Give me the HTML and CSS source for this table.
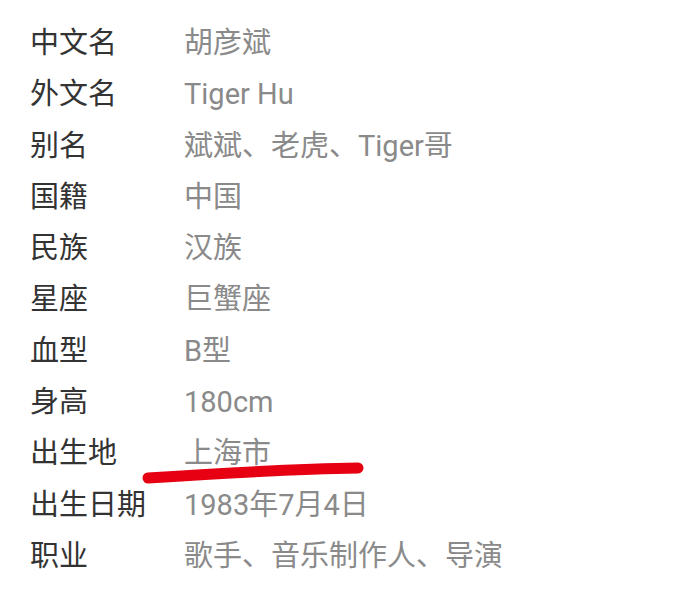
FILE: index.html
```html
<!DOCTYPE html>
<html lang="zh-CN">
<head>
    <meta charset="UTF-8">
    <meta name="viewport" content="width=device-width, initial-scale=1.0">
    <title>胡彦斌</title>
    <link rel="stylesheet" href="styles.css">
</head>
<body>
    <div class="card">
        <dl class="info">
            <dt>中文名</dt><dd>胡彦斌</dd>
            <dt>外文名</dt><dd>Tiger Hu</dd>
            <dt>别名</dt><dd>斌斌、老虎、Tiger哥</dd>
            <dt>国籍</dt><dd>中国</dd>
            <dt>民族</dt><dd>汉族</dd>
            <dt>星座</dt><dd>巨蟹座</dd>
            <dt>血型</dt><dd>B型</dd>
            <dt>身高</dt><dd>180cm</dd>
            <dt>出生地</dt><dd>上海市</dd>
            <dt>出生日期</dt><dd>1983年7月4日</dd>
            <dt>职业</dt><dd>歌手、音乐制作人、导演</dd>
        </dl>
        <svg class="mark" width="690" height="589" viewBox="0 0 690 589">
            <path d="M148 478 C 210 474, 290 469, 358 468" fill="none" stroke="#e60012" stroke-width="11" stroke-linecap="round"/>
        </svg>
    </div>
</body>
</html>
```

FILE: styles.css
```css
body {
    margin: 0;
    background: #fff;
    font-family: Roboto, "Noto Sans CJK SC", sans-serif;
}
.card {
    position: relative;
    width: 690px;
    height: 589px;
}
.info {
    margin: 0;
    padding: 18px 0 0 30px;
    display: grid;
    grid-template-columns: 154px 1fr;
    font-size: 29px;
    line-height: 51.3px;
}
.info dt {
    color: #333;
}
.info dd {
    margin: 0;
    color: #8a8a8a;
}
.mark {
    position: absolute;
    left: 0;
    top: 0;
    pointer-events: none;
}
```
